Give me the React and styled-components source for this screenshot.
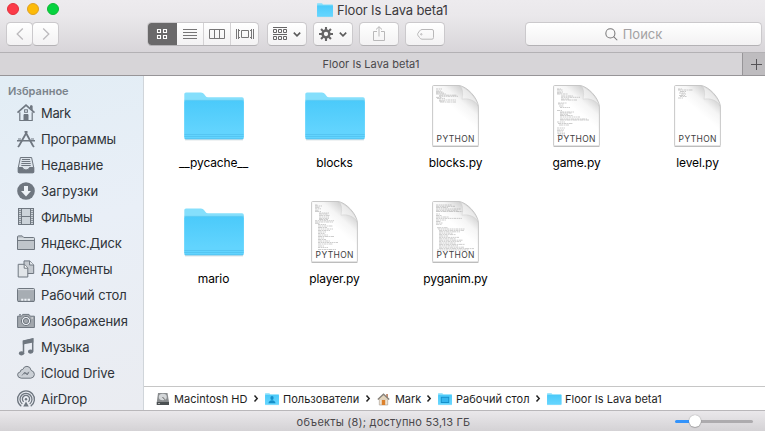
import React from "react";
import styled, { createGlobalStyle } from "styled-components";

const GlobalStyle = createGlobalStyle`
  * { box-sizing: border-box; }
  body { margin: 0; overflow: hidden; font-family: Inter, "Liberation Sans", sans-serif; }
  svg { display: block; flex: none; overflow: visible; }
`;

const Window = styled.div`
  width: 765px;
  height: 431px;
  display: flex;
  flex-direction: column;
  background: #fff;
`;
const Header = styled.header`
  height: 53px;
  flex: none;
  background: linear-gradient(#edebee, #eae8eb 30%, #d8d5d9);
  border-bottom: 1px solid #b3b1b4;
`;
const TitleRow = styled.div`
  height: 22px;
  display: flex;
  align-items: flex-start;
`;
const Lights = styled.div`
  display: flex;
  gap: 8px;
  padding: 3px 0 0 7px;
  width: 317px;
`;
const Light = styled.span`
  width: 12px;
  height: 12px;
  border-radius: 50%;
  background: ${(p) => p.$fill};
  border: 1px solid ${(p) => p.$edge};
`;
const Text = styled.span`
  white-space: pre;
  letter-spacing: ${(p) => p.$track || 0}px;
`;
const Title = styled.div`
  display: flex;
  align-items: center;
  gap: 4px;
  height: 19px;
  font-size: 13px;
  color: #3c3a3d;
`;
const Toolbar = styled.div`
  display: flex;
  height: 24px;
  padding-left: 6px;
`;
const Button = styled.div`
  display: flex;
  align-items: center;
  justify-content: center;
  gap: ${(p) => p.$gap || 0}px;
  width: ${(p) => p.$width}px;
  height: 24px;
  margin-left: ${(p) => p.$before || 0}px;
  border: 1px solid #cbc9cc;
  border-bottom-color: #b4b2b5;
  border-radius: 4.5px;
  background: linear-gradient(#fff, #f3f2f3);
  flex: none;
`;
const Segments = styled(Button)`
  justify-content: flex-start;
  overflow: hidden;
`;
const Segment = styled.div`
  width: ${(p) => p.$width}px;
  height: 24px;
  margin: -1px 0 -1px ${(p) => (p.$active ? -1 : 0)}px;
  flex: none;
  display: flex;
  align-items: center;
  justify-content: center;
  background: ${(p) => (p.$active ? "#6a696a" : "transparent")};
  border-right: ${(p) => (p.$last ? 0 : 1)}px solid #d4d2d4;
`;
const Search = styled(Button)`
  font-size: 13px;
  color: #a3a1a3;
  padding-right: 20px;
`;
const TabBar = styled.div`
  height: 23px;
  flex: none;
  display: flex;
  background: #d7d5d8;
  border-bottom: 1px solid #979598;
  font-size: 11px;
  color: #4a484b;
`;
const Tab = styled.div`
  width: 742px;
  display: flex;
  align-items: center;
  justify-content: center;
`;
const AddTab = styled.div`
  flex: 1;
  display: flex;
  align-items: center;
  justify-content: center;
  padding-left: 5px;
  background: #bebcbf;
  border-left: 1px solid #979598;
`;
const Body = styled.div`
  height: 334px;
  flex: none;
  display: flex;
`;
const Sidebar = styled.nav`
  width: 144px;
  flex: none;
  background: linear-gradient(165deg, #e2edf5, #e9eff7 45%, #eaecf1);
  border-right: 1px solid #d0d5da;
  padding-top: 6px;
  overflow: hidden;
`;
const SidebarHeading = styled.div`
  height: 18px;
  line-height: 18px;
  padding-left: 8px;
  font-size: 11px;
  font-weight: 600;
  color: #7b848c;
`;
const SidebarItem = styled.div`
  height: 26px;
  display: flex;
  align-items: center;
  gap: 6px;
  padding-left: 17px;
  font-size: 13px;
  color: #2f3439;
`;
const Main = styled.main`
  flex: 1;
  display: flex;
  flex-direction: column;
`;
const Files = styled.div`
  height: 310px;
  flex: none;
  display: grid;
  grid-template-columns: repeat(5, 121px);
  grid-auto-rows: 116px;
  padding: 8px 0 0 9px;
`;
const File = styled.div`
  display: flex;
  flex-direction: column;
  align-items: center;
  font-size: 12px;
  color: #000;
`;
const Preview = styled.div`
  height: 70px;
  display: flex;
  align-items: flex-start;
  padding-top: ${(p) => (p.$folder ? 8 : 1)}px;
`;
const FileName = styled.div`
  height: 18px;
  line-height: 18px;
`;
const PathBar = styled.div`
  height: 24px;
  display: flex;
  align-items: center;
  border-top: 1px solid #c6c6c6;
  padding-left: 12px;
  font-size: 11px;
  color: #1e1e1e;
`;
const Crumb = styled.div`
  width: ${(p) => p.$width}px;
  display: flex;
  align-items: center;
  flex: none;
`;
const CrumbIcon = styled.div`
  width: 18px;
  flex: none;
`;
const Chevron = styled.div`
  margin-left: auto;
  padding-right: 7px;
`;
const StatusBar = styled.footer`
  height: 21px;
  flex: none;
  display: grid;
  grid-template-columns: 1fr auto 1fr;
  align-items: center;
  border-top: 1px solid #b9b7ba;
  background: linear-gradient(#eae8eb, #d4d2d5);
  font-size: 11px;
  color: #4a484b;
`;
const StatusText = styled.div`
  grid-column: 2;
  padding: 2px 0 0 2px;
`;
const Slider = styled.div`
  justify-self: end;
  width: 78px;
  height: 3px;
  margin-right: 12px;
  border-radius: 2px;
  background: linear-gradient(90deg, #3393fb 0 20px, #adabae 20px);
  display: flex;
  align-items: center;
  padding-left: 14px;
`;
const Knob = styled.span`
  width: 12px;
  height: 12px;
  border-radius: 50%;
  background: #fff;
  box-shadow: 0 0 1px #777, 0 1px 1px rgba(0, 0, 0, 0.2);
`;

function Folder({ width = 60, height = 48, mark }) {
  const id = "folder" + width + (mark || "");
  return (
    <svg width={width} height={height} viewBox="0 0 60 48" preserveAspectRatio="none">
      <defs>
        <linearGradient id={id} x2="0" y2="1">
          <stop stopColor="#4bcafa" />
          <stop offset=".8" stopColor="#62d4fe" />
        </linearGradient>
      </defs>
      <path d="M1 47.8H59" stroke="#c9d2d6" strokeWidth="1" />
      <path d="M.3 2Q.3 .5 2 .5H17Q19 .5 20 2L21.5 4Q22.3 5.3 24 5.3H58Q59.8 5.3 59.8 7V45H.3Z" fill="#85dffc" />
      <path d="M.3 10Q.3 8.2 2 8.2H58Q59.8 8.2 59.8 10V45.5Q59.8 47.3 58 47.3H2Q.3 47.3 .3 45.5Z" fill={`url(#${id})`} />
      <path d="M.3 8.3H59.8" stroke="#61c8ee" strokeWidth=".6" />
      {width > 30 && <path d="M.5 42.5H59.5M.5 44.5H59.5M.5 46.7H59.5" stroke="#4dbdea" strokeWidth=".8" opacity=".75" />}
      {mark === "users" && (
        <g fill="#168fc9">
          <ellipse cx="30" cy="20" rx="7" ry="8" />
          <path d="M15 41Q16 30 30 29Q44 30 45 41Z" />
        </g>
      )}
      {mark === "desktop" && <rect x="14" y="17" width="32" height="21" fill="#35b5ed" stroke="#168fc9" strokeWidth="4" />}
    </svg>
  );
}

/* Each entry is [x, y, width] of one line of code in the thumbnail. */
const code = {
  blocks: [[4,4,6],[4,6,5],[4,7,7],[4,8,8],[4,9,10],[7,10.2,18],[7,11.3,19],[4,12.4,6],[5,13.4,8],[7,15,17],[7,16,6],[8,17,16]],
  game: [[4,4,4],[4,5,6],[4,7,6],[4,8,5],[4,9,11],[8,11,12],[8,12.3,19],[8,14,8],[8,15,16],[5,18,9],[5,19,6],[6,21,5],[7,22.5,10],[4,25.5,5],[7,27,14],[7,28,12],[7,29.3,8],[7,30.5,13],[7,32,20],[7,34,27],[7,35,29],[4,37,8],[5,38.5,15],[6,40,10],[4,43,8],[4,45,7],[4,46,6],[4,48,8],[5,49,7],[4,50.5,7]],
  level: [[4,4,4],[4,5,15],[6,6.5,6],[5,8,6],[7,9,5],[5,10.5,6],[6,11.5,7],[4,13,5]],
  player: [[4,4,3],[4,5,7],[4,6.3,5],[4,7.8,6],[4,9.3,4],[4,10.5,6],[8,12,10],[8,13,9],[8,14.4,11],[8,16,10],[8,17.4,10],[8,18.5,9],[4,19.7,19],[4,21,18],[4,22.3,5],[7,23.5,8],[7,25,15],[7,26.5,9],[7,28,15],[7,29.5,12],[7,31,8],[7,32.5,7],[7,34,10],[7,35.5,16],[7,37,6],[7,38.5,8],[7,40,12],[7,41.5,20],[7,43,15],[7,45,6],[7,46.5,10],[7,48.5,18]],
  pyganim: [[4,4,16],[4,5.3,19],[4,6.6,12],[4,8,25],[4,9.3,22],[4,10.5,28],[4,13,4],[4,14.5,6],[4,16,13],[4,17.4,26],[4,19,10],[4,20.5,5],[4,22,7],[4,23.3,6],[5,26.7,11],[6,28,27],[7,29.4,25],[7,30.8,21],[7,32.2,14],[7,33.6,17],[7,35,9],[7,36.4,20],[7,37.8,17],[7,39.2,24],[7,40.6,22],[7,42,17],[7,43.4,26],[7,44.8,19],[7,46.2,25],[7,47.6,35],[5,49,32]],
};

function PythonDoc({ name }) {
  return (
    <svg width="47" height="62" viewBox="0 0 47 62">
      <defs>
        <linearGradient id={"page" + name} gradientUnits="userSpaceOnUse" x1="24" y1="26" x2="38" y2="10">
          <stop stopColor="#fff" />
          <stop offset=".5" stopColor="#f5f5f5" />
          <stop offset="1" stopColor="#d2d2d2" />
        </linearGradient>
        <linearGradient id={"curl" + name} x1="0" y1="1" x2=".7" y2=".3">
          <stop stopColor="#fff" />
          <stop offset="1" stopColor="#e4e4e4" />
        </linearGradient>
      </defs>
      <path d="M.6 61.4H46.4" stroke="#bbb" strokeWidth="1.2" />
      <path d="M1.5.5H27C35 1.5 46 13 46.4 22V60Q46.4 61 45.4 61H1.5Q.6 61 .6 60V1.5Q.6.5 1.5.5Z" fill={`url(#page${name})`} stroke="#c2c2c2" strokeWidth=".9" />
      <g stroke="#777" strokeWidth=".6" opacity=".6">
        {code[name].map(([x, y, w], i) => (
          <path key={i} d={`M${x} ${y}h${w}`} strokeDasharray={`${2 + (i % 3)} .6 1.4 .5`} />
        ))}
      </g>
      <path d="M27 .6C31 2 31 8 30 14.2C36 13 43 15 46.3 21C44 12 35 3 27 .6Z" fill={`url(#curl${name})`} stroke="#c8c8c8" strokeWidth=".4" />
      <text x="4.6" y="57.2" fontSize="8.5" textLength="37.8" fill="#3e3e3e">PYTHON</text>
    </svg>
  );
}

const G = "#6f7780";
const SideIcon = ({ children }) => (
  <svg width="18" height="18" viewBox="0 0 18 18" fill="none" stroke={G} strokeWidth="1">
    {children}
  </svg>
);
const sideIcons = {
  home: (
    <SideIcon>
      <path d="M.5 8.6 9 1.2 17.5 8.6" strokeWidth="1.7" />
      <path d="M13.5 4V1.8h1.6V6" fill={G} />
      <path d="M2.8 8.2V16.5H15.2V8.2" strokeWidth="1.2" />
      <path d="M7 16.5V10.5H11V16.5Z" fill={G} />
      <rect x="7.6" y="5.8" width="2.8" height="2.5" />
    </SideIcon>
  ),
  apps: (
    <SideIcon>
      <path d="M9.8 2 2.2 15.5 1 17M8.5 2 15.8 15.5 17 17" strokeWidth="1.8" />
      <path d="M7.5 1.8H10.5M0 10.7H18" strokeWidth="1.6" />
      <path d="M1 9H4M14 9H17" />
    </SideIcon>
  ),
  recent: (
    <SideIcon>
      <path d="M3.4 1.5H14.6L16.7 11.5V15.5Q16.7 16.8 15.5 16.8H2.5Q1.3 16.8 1.3 15.5V11.5Z" fill="#dce3ea" />
      <path d="M1.3 11.5H5.5Q6.2 14 9 14Q11.8 14 12.5 11.5H16.7V16.6H1.3Z" fill={G} />
      <path d="M5 3.5H13M4.6 5.5H13.4M4.3 7.5H13.7M4.3 9.5H13.7" />
    </SideIcon>
  ),
  downloads: (
    <SideIcon>
      <circle cx="9" cy="9" r="8.8" fill={G} stroke="none" />
      <path d="M7 4H11V9H14L9 14.5 4 9H7Z" fill="#edf2f7" stroke="none" />
    </SideIcon>
  ),
  movies: (
    <SideIcon>
      <rect x="1.5" y=".5" width="15" height="16" fill="#ccd3da" />
      <path d="M4.5 .5V16.5M13.5 .5V16.5M4.5 8.5H13.5" />
      <path d="M3 2V16M15 2V16" strokeDasharray="1 1" strokeWidth="1.4" />
    </SideIcon>
  ),
  folder: (
    <SideIcon>
      <path d="M.5 15.5V3Q.5 1.9 1.5 1.9H5.2L6.8 3.5H16.5Q17.5 3.5 17.5 4.5V15.5Z" fill="#bfc5cb" />
      <path d="M.5 6.5H17.5" />
      <path d="M1.1 5H17" stroke="#dce1e6" strokeWidth="1.6" />
    </SideIcon>
  ),
  documents: (
    <SideIcon>
      <path d="M7 .9H12.8L16.7 5V13.5H7Z" fill="#c5cad0" />
      <path d="M12.6 1V5H16.7" fill="#edf1f5" />
      <path d="M1.2 4.3H7.5L10.8 8V17H1.2Z" fill="#e1e5e9" />
      <path d="M7.2 4.4V8.2H10.8" fill="#fff" />
    </SideIcon>
  ),
  desktop: (
    <SideIcon>
      <rect x=".5" y="2.5" width="17" height="13" rx="1" fill="#a7adb3" />
      <path d="M1 3.6H17" stroke="#d8dde2" />
      <path d="M1 15.4H17" strokeWidth="1.2" />
      <path d="M4.2 13.7H6.3M7.4 13.7H9.5M10.6 13.7H13" stroke="#edf1f5" strokeWidth="2" />
    </SideIcon>
  ),
  pictures: (
    <SideIcon>
      <path d="M.6 4.2H4.5L5.7 2.4H12L13.3 4.2H17.4V15.5H.6Z" fill="#a2a7ad" />
      <path d="M2 2.8H4" strokeWidth="1.3" />
      <circle cx="9" cy="9" r="4.6" fill="#e8ecf1" />
      <circle cx="9" cy="9" r="2.6" fill="#a2a7ad" />
      <path d="M14.4 6H16" stroke="#eee" />
    </SideIcon>
  ),
  music: (
    <SideIcon>
      <path d="M6.5 14.8V3L15.7 1V13" strokeWidth="1.5" />
      <path d="M5.8 2.7 16.4.3V4.5L5.8 6.6Z" fill={G} stroke="none" />
      <ellipse cx="4.6" cy="15.3" rx="2.7" ry="2.1" fill={G} stroke="none" />
      <ellipse cx="13.7" cy="13.6" rx="2.7" ry="2.1" fill={G} stroke="none" />
    </SideIcon>
  ),
  cloud: (
    <SideIcon>
      <path d="M4.2 14.2Q.6 13.8.6 10.8Q.6 8.3 3.3 7.9Q3.2 5.5 5.8 5.4Q7 2.2 10 2.3Q13.6 2.6 14.1 6.4Q17.4 7.2 17.4 10.5Q17.2 13.8 13.8 14.2Z" fill="#cbd0d6" />
      <path d="M5 11.5 7.8 8 10.2 11 12 7.8M7 9.8 11.5 9" strokeWidth=".9" />
    </SideIcon>
  ),
  airdrop: (
    <SideIcon>
      <path d="M4.3 16.3A8.4 8.4 0 1 1 13.7 16.3M5.3 14A6 6 0 1 1 12.7 14M6.7 11.8A3.6 3.6 0 1 1 11.3 11.8" strokeWidth="1.3" />
      <circle cx="9" cy="9.3" r="1.2" fill={G} stroke="none" />
      <path d="M9 11.5 6.2 16.5H11.8Z" fill={G} stroke="none" />
    </SideIcon>
  ),
};

const favourites = [
  ["home", "Mark", -0.35],
  ["apps", "Программы", -0.15],
  ["recent", "Недавние", -0.1],
  ["downloads", "Загрузки", 0],
  ["movies", "Фильмы", -0.25],
  ["folder", "Яндекс.Диск", -0.17],
  ["documents", "Документы", -0.3],
  ["desktop", "Рабочий стол", -0.06],
  ["pictures", "Изображения", -0.06],
  ["music", "Музыка", -0.15],
  ["cloud", "iCloud Drive", -0.13],
  ["airdrop", "AirDrop", -0.15],
];
const files = [
  ["__pycache__", null, -0.15],
  ["blocks", null, -0.15],
  ["blocks.py", "blocks", -0.1],
  ["game.py", "game", -0.1],
  ["level.py", "level", -0.1],
  ["mario", null, -0.1],
  ["player.py", "player", -0.12],
  ["pyganim.py", "pyganim", -0.12],
];

const Disk = () => (
  <svg width="14" height="14" viewBox="0 0 14 14">
    <path d="M2 1H11.5L13 10V13H.8V10Z" fill="#8a8d8f" />
    <ellipse cx="6.8" cy="5" rx="4" ry="3.2" fill="#d4d7d9" />
    <path d="M6.5 5 9 7.8" stroke="#666" />
    <path d="M.8 10H13V13H.8Z" fill="#4b5052" />
    <path d="M2 11.5H4" stroke="#aaa" />
  </svg>
);
const House = () => (
  <svg width="14" height="14" viewBox="0 0 14 14">
    <path d="M2.3 7H10.7V13H2.3Z" fill="#eee3d2" stroke="#a49a8d" strokeWidth=".6" />
    <path d="M9.3 2H10.8V6H9.3Z" fill="#b2704e" />
    <path d="M.8 7.5 6.5 2.2 12.2 7.5" fill="#e4d5bd" stroke="#85807a" strokeWidth="1.3" />
    <path d="M4.8 8H8.2V13H4.8Z" fill="#dc812b" />
  </svg>
);
const crumbs = [
  [<Disk />, "Macintosh HD", 109, 0.03],
  [<Folder width={14} height={12} mark="users" />, "Пользователи", 112, 0.03],
  [<House />, "Mark", 61, -0.1],
  [<Folder width={14} height={12} mark="desktop" />, "Рабочий стол", 109, 0.05],
  [<Folder width={14.5} height={12} />, "Floor Is Lava beta1", 130, 0.04],
];

const Arrow = ({ d }) => (
  <svg width="8" height="12" viewBox="0 0 8 12" fill="none" stroke="#bcbabd" strokeWidth="1.3">
    <path d={d} />
  </svg>
);
const Down = () => (
  <svg width="8" height="5" viewBox="0 0 8 5" fill="none" stroke="#5b5a5b" strokeWidth="1.6">
    <path d="M.8.6 4 3.8 7.2.6" />
  </svg>
);

export default function App() {
  return (
    <Window>
      <GlobalStyle />
      <Header>
        <TitleRow>
          <Lights>
            <Light $fill="#fc3a48" $edge="#e2303b" />
            <Light $fill="#fdbb08" $edge="#dfa022" />
            <Light $fill="#06d33f" $edge="#0fb836" />
          </Lights>
          <Title>
            <Folder width={16} height={14} />
            <Text $track={-0.15}>Floor Is Lava beta1</Text>
          </Title>
        </TitleRow>
        <Toolbar>
          <Button $width={27}><Arrow d="M6.8.5 1.2 6 6.8 11.5" /></Button>
          <Button $width={27} $before={-1}><Arrow d="M1.2.5 6.8 6 1.2 11.5" /></Button>
          <Segments $width={112} $before={88}>
            <Segment $width={30} $active $last>
              <svg width="12" height="12" viewBox="0 0 12 12" fill="none" stroke="#fff" strokeWidth="1.1">
                <path d="M1.5 1.5h3v3h-3ZM7.5 1.5h3v3h-3ZM1.5 7.5h3v3h-3ZM7.5 7.5h3v3h-3Z" />
              </svg>
            </Segment>
            <Segment $width={27}>
              <svg width="14" height="12" viewBox="0 0 14 12" stroke="#777677"><path d="M0 1.5H14M0 4.5H14M0 7.5H14M0 10.5H14" /></svg>
            </Segment>
            <Segment $width={27}>
              <svg width="16" height="10" viewBox="0 0 16 10" stroke="#777677" fill="none"><path d="M.5.5H15.5V9.5H.5ZM5.5.5V9.5M10.5.5V9.5" /></svg>
            </Segment>
            <Segment $width={27} $last>
              <svg width="18" height="10" viewBox="0 0 18 10" stroke="#777677" fill="none"><path d="M5.5 1.5H12.5V8.5H5.5ZM.5 0V10M2.5 0V10M15.5 0V10M17.5 0V10M3 1.5H4M3 8.5H4M14 1.5H15M14 8.5H15" /></svg>
            </Segment>
          </Segments>
          <Button $width={40} $before={8} $gap={6}>
            <svg width="14" height="14" viewBox="0 0 14 14" stroke="#666566" fill="none">
              <path d="M0 .5H14M0 7.5H14M.5 2.5h3v3h-3ZM5.5 2.5h3v3h-3ZM10.5 2.5h3v3h-3ZM.5 9.5h3v3h-3ZM5.5 9.5h3v3h-3ZM10.5 9.5h3v3h-3Z" />
            </svg>
            <Down />
          </Button>
          <Button $width={40} $before={6} $gap={6}>
            <svg width="14" height="14" viewBox="0 0 14 14" stroke="#666566" fill="none">
              <circle cx="7" cy="7" r="3.4" strokeWidth="2.5" />
              <path d="M7 0V3M7 11V14M0 7H3M11 7H14M2.05 2.05 4.2 4.2M9.8 9.8 11.95 11.95M11.95 2.05 9.8 4.2M4.2 9.8 2.05 11.95" strokeWidth="2.1" />
            </svg>
            <Down />
          </Button>
          <Button $width={40} $before={6}>
            <svg width="12" height="16" viewBox="0 0 12 16" stroke="#b9b8b9" fill="none">
              <path d="M4 5.5H.5V14.5H11.5V5.5H8M6 10.5V.7M3 3.5 6 .7 9 3.5" />
            </svg>
          </Button>
          <Button $width={40} $before={6}>
            <svg width="17" height="11" viewBox="0 0 17 11" stroke="#b9b8b9" fill="none">
              <path d="M5 .5H15Q16.5.5 16.5 2V8.5Q16.5 10.2 15 10.2H5Q3.5 10.2 2.5 8.5L.8 6.2Q.4 5.4.8 4.5L2.5 2Q3.5.5 5 .5Z" />
              <circle cx="4.3" cy="5.3" r=".7" />
            </svg>
          </Button>
          <Search $width={237} $before={80} $gap={5}>
            <svg width="13" height="13" viewBox="0 0 14 14" stroke="#767576" fill="none" strokeWidth="1.1">
              <circle cx="5.8" cy="5.8" r="4.9" /><path d="M9.3 9.3 13.2 13.2" />
            </svg>
            <Text $track={0}>Поиск</Text>
          </Search>
        </Toolbar>
      </Header>
      <TabBar>
        <Tab><Text $track={0.04}>Floor Is Lava beta1</Text></Tab>
        <AddTab>
          <svg width="11" height="11" viewBox="0 0 11 11" stroke="#555356"><path d="M0 5.5H11M5.5 0V11" /></svg>
        </AddTab>
      </TabBar>
      <Body>
        <Sidebar>
          <SidebarHeading><Text $track={0}>Избранное</Text></SidebarHeading>
          {favourites.map(([icon, label, track]) => (
            <SidebarItem key={label}>
              {sideIcons[icon]}
              <Text $track={track}>{label}</Text>
            </SidebarItem>
          ))}
        </Sidebar>
        <Main>
          <Files>
            {files.map(([label, doc, track]) => (
              <File key={label}>
                <Preview $folder={!doc}>{doc ? <PythonDoc name={doc} /> : <Folder />}</Preview>
                <FileName><Text $track={track}>{label}</Text></FileName>
              </File>
            ))}
          </Files>
          <PathBar>
            {crumbs.map(([icon, label, width, track], i) => (
              <Crumb key={label} $width={width}>
                <CrumbIcon>{icon}</CrumbIcon>
                <Text $track={track}>{label}</Text>
                {i < crumbs.length - 1 && (
                  <Chevron>
                    <svg width="4" height="7" viewBox="0 0 4 7" fill="none" stroke="#222" strokeWidth="1.5"><path d="M.5.5 3.2 3.5.5 6.5" /></svg>
                  </Chevron>
                )}
              </Crumb>
            ))}
          </PathBar>
        </Main>
      </Body>
      <StatusBar>
        <StatusText><Text $track={0.21}>объекты (8); доступно 53,13 ГБ</Text></StatusText>
        <Slider><Knob /></Slider>
      </StatusBar>
    </Window>
  );
}
